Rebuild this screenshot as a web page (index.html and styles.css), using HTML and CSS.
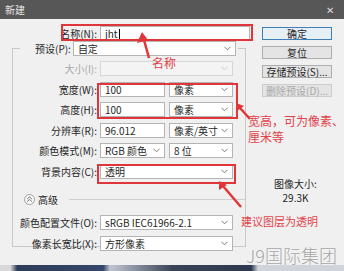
FILE: index.html
```html
<!DOCTYPE html>
<html lang="zh-CN">
<head>
    <meta charset="UTF-8">
    <title>新建</title>
    <link rel="stylesheet" href="styles.css">
</head>
<body>
    <div class="dialog">
        <div class="titlebar">
            <span class="title">新建</span>
            <span class="close">✕</span>
        </div>

        <div class="main">
            <div class="left">
                <div class="name-row">
                    <span class="label">名称(N):</span>
                    <div class="field name-field">jht<span class="caret"></span></div>
                </div>

                <fieldset class="group">
                    <legend class="preset">
                        <span class="label">预设(P):</span>
                        <div class="field select preset-select"><span>自定</span><svg class="chev" viewBox="0 0 8 5"><polyline points="0.5,0.5 4,4 7.5,0.5"/></svg></div>
                    </legend>

                    <div class="grid">
                        <span class="label off">大小(I):</span>
                        <div class="field select wide off"><span></span><svg class="chev" viewBox="0 0 8 5"><polyline points="0.5,0.5 4,4 7.5,0.5"/></svg></div>

                        <span class="label">宽度(W):</span>
                        <div class="field">100</div>
                        <div class="field select"><span>像素</span><svg class="chev" viewBox="0 0 8 5"><polyline points="0.5,0.5 4,4 7.5,0.5"/></svg></div>

                        <span class="label">高度(H):</span>
                        <div class="field">100</div>
                        <div class="field select"><span>像素</span><svg class="chev" viewBox="0 0 8 5"><polyline points="0.5,0.5 4,4 7.5,0.5"/></svg></div>

                        <span class="label">分辨率(R):</span>
                        <div class="field">96.012</div>
                        <div class="field select"><span>像素/英寸</span><svg class="chev" viewBox="0 0 8 5"><polyline points="0.5,0.5 4,4 7.5,0.5"/></svg></div>

                        <span class="label">颜色模式(M):</span>
                        <div class="field select"><span>RGB 颜色</span><svg class="chev" viewBox="0 0 8 5"><polyline points="0.5,0.5 4,4 7.5,0.5"/></svg></div>
                        <div class="field select"><span>8 位</span><svg class="chev" viewBox="0 0 8 5"><polyline points="0.5,0.5 4,4 7.5,0.5"/></svg></div>

                        <span class="label">背景内容(C):</span>
                        <div class="field select wide"><span>透明</span><svg class="chev" viewBox="0 0 8 5"><polyline points="0.5,0.5 4,4 7.5,0.5"/></svg></div>
                    </div>

                    <div class="advanced">
                        <svg class="adv-icon" viewBox="0 0 11 11">
                            <circle cx="5.5" cy="5.5" r="5"/>
                            <polyline points="3.2,5 5.5,2.8 7.8,5"/>
                            <polyline points="3.2,7.6 5.5,5.4 7.8,7.6"/>
                        </svg>
                        <span>高级</span>
                        <span class="rule"></span>
                    </div>

                    <div class="grid">
                        <span class="label">颜色配置文件(O):</span>
                        <div class="field select wide"><span>sRGB IEC61966-2.1</span><svg class="chev" viewBox="0 0 8 5"><polyline points="0.5,0.5 4,4 7.5,0.5"/></svg></div>

                        <span class="label">像素长宽比(X):</span>
                        <div class="field select wide"><span>方形像素</span><svg class="chev" viewBox="0 0 8 5"><polyline points="0.5,0.5 4,4 7.5,0.5"/></svg></div>
                    </div>
                </fieldset>
            </div>

            <div class="side">
                <button class="btn primary">确定</button>
                <button class="btn">复位</button>
                <button class="btn">存储预设(S)...</button>
                <button class="btn off">删除预设(D)...</button>
                <div class="info">
                    <div>图像大小:</div>
                    <div>29.3K</div>
                </div>
            </div>
        </div>

        <div class="bottom-strip"></div>

        <!-- red annotations drawn over the dialog -->
        <div class="mark mark-name"></div>
        <div class="mark mark-size"></div>
        <div class="mark mark-bg"></div>
        <svg class="arrows" viewBox="0 0 344 271">
            <line x1="149" y1="58" x2="144" y2="40"/>
            <polygon points="142,32 137,43 148,40"/>
            <line x1="250" y1="119" x2="240" y2="108"/>
            <polygon points="236,103 237,111 244,106"/>
            <line x1="241" y1="207" x2="223" y2="186"/>
            <polygon points="219,181 219,190 227,185"/>
        </svg>
        <div class="note note-name">名称</div>
        <div class="note note-size">宽高，可为像素、<br>厘米等</div>
        <div class="note note-bg">建议图层为透明</div>

        <div class="watermark">J9国际集团</div>
    </div>
</body>
</html>
```

FILE: styles.css
```css
* {
    margin: 0;
    padding: 0;
    box-sizing: border-box;
}

body {
    width: 344px;
    height: 271px;
    overflow: hidden;
    font-family: "Noto Sans CJK SC", sans-serif;
    font-size: 10px;
    color: #262626;
    background: #f0f0f0;
}

.dialog {
    position: relative;
    width: 344px;
    height: 271px;
    background: #f0f0f0;
}

/* Title bar */
.titlebar {
    height: 19px;
    background: #575757;
    color: #e6e6e6;
    display: flex;
    align-items: center;
    justify-content: space-between;
    padding: 0 10px 0 5px;
    font-size: 10px;
}

.close {
    font-size: 10px;
    color: #dcdcdc;
}

.main {
    display: flex;
    height: 246px;
}

.left {
    width: 247px;
}

.label {
    text-align: right;
    white-space: nowrap;
    line-height: 15px;
}

.label.off {
    color: #a8a8a8;
}

.field {
    height: 15px;
    line-height: 13px;
    background: #fff;
    border: 1px solid #b4b4b4;
    padding: 0 4px;
    white-space: nowrap;
    overflow: hidden;
}

.select {
    display: flex;
    justify-content: space-between;
    align-items: center;
}

.field.off {
    background: #f4f4f4;
    border-color: #d6d6d6;
}

.chev {
    width: 7px;
    height: 5px;
    flex: none;
    fill: none;
    stroke: #6a6a6a;
    stroke-width: 1;
}

.off .chev {
    stroke: #c4c4c4;
}

/* Name row */
.name-row {
    display: grid;
    grid-template-columns: 97px 150px;
    column-gap: 3px;
    margin-top: 7px;
}

.name-field {
    display: flex;
    align-items: center;
}

.caret {
    display: inline-block;
    width: 1px;
    height: 10px;
    background: #000;
    margin-left: 1px;
}

/* Group box */
.group {
    margin: 0 1px 0 12px;
    height: 206px;
    border: 1px solid #c8c8c8;
    padding: 0 0 0 7px;
}

.preset {
    display: flex;
    align-items: center;
    gap: 2px;
    padding: 0 2px 0 15px;
    margin-top: -6px;
    height: 15px;
}

.preset-select {
    width: 163px;
}

.grid {
    display: grid;
    grid-template-columns: 77px 66px 65px;
    grid-auto-rows: 15px;
    column-gap: 3px;
    row-gap: 5.6px;
    margin-top: 5px;
}

.grid .field {
    margin-right: 1px;
}

.grid .wide {
    grid-column: span 2;
}

.grid .label {
    grid-column: 1;
}

/* Advanced toggle */
.advanced {
    display: flex;
    align-items: center;
    height: 15px;
    margin: 13px 0 0 4px;
    gap: 3px;
}

.adv-icon {
    width: 11px;
    height: 11px;
    fill: #fafafa;
    stroke: #8a8a8a;
    stroke-width: 0.8;
}

.adv-icon polyline {
    fill: none;
    stroke: #444;
}

.advanced .rule {
    flex: 1;
    height: 1px;
    background: #cfcfcf;
    margin-left: 8px;
}

.advanced + .grid {
    margin-top: 8px;
}

/* Buttons on the right */
.side {
    flex: 1;
    display: flex;
    flex-direction: column;
    gap: 6px;
    padding: 8px 0 0 15px;
}

.btn {
    width: 70px;
    height: 13px;
    font-family: inherit;
    font-size: 10px;
    line-height: 11px;
    color: #262626;
    background: #e4e4e4;
    border: 1px solid #adadad;
}

.btn.primary {
    border-color: #3f7fb8;
    background: #e6eef6;
}

.btn.off {
    color: #a8a8a8;
    border-color: #cdcdcd;
}

.info {
    margin: 74px 0 0 -15px;
    text-align: center;
    font-size: 10px;
    line-height: 14px;
}

.bottom-strip {
    height: 6px;
    background: linear-gradient(to right, #d8d8d8 3%, #2e3d5a 5%, #34466a 30%, #c0c6d0 32%, #3a4358 50%, #2d3850 73%, #cfd3da 75%);
}

/* Red annotations */
.mark {
    position: absolute;
    border: 2px solid #e0363a;
}

.mark-name {
    left: 61px;
    top: 24px;
    width: 192px;
    height: 17px;
}

.mark-size {
    left: 97px;
    top: 83px;
    width: 141px;
    height: 36px;
}

.mark-bg {
    left: 97px;
    top: 164px;
    width: 139px;
    height: 20px;
}

.arrows {
    position: absolute;
    left: 0;
    top: 0;
    width: 344px;
    height: 271px;
}

.arrows line {
    stroke: #e0363a;
    stroke-width: 2.5;
}

.arrows polygon {
    fill: #e0363a;
}

.note {
    position: absolute;
    color: #e2434a;
    font-size: 12px;
    line-height: 16px;
    white-space: nowrap;
}

.note-name {
    left: 152px;
    top: 55px;
}

.note-size {
    left: 248px;
    top: 113px;
}

.note-bg {
    left: 241px;
    top: 213px;
    font-size: 11px;
}

.watermark {
    position: absolute;
    left: 246px;
    top: 245px;
    font-size: 18px;
    line-height: 20px;
    font-weight: 300;
    color: #a5a5a5;
    text-shadow: 0 0 2px #fff;
}
```
